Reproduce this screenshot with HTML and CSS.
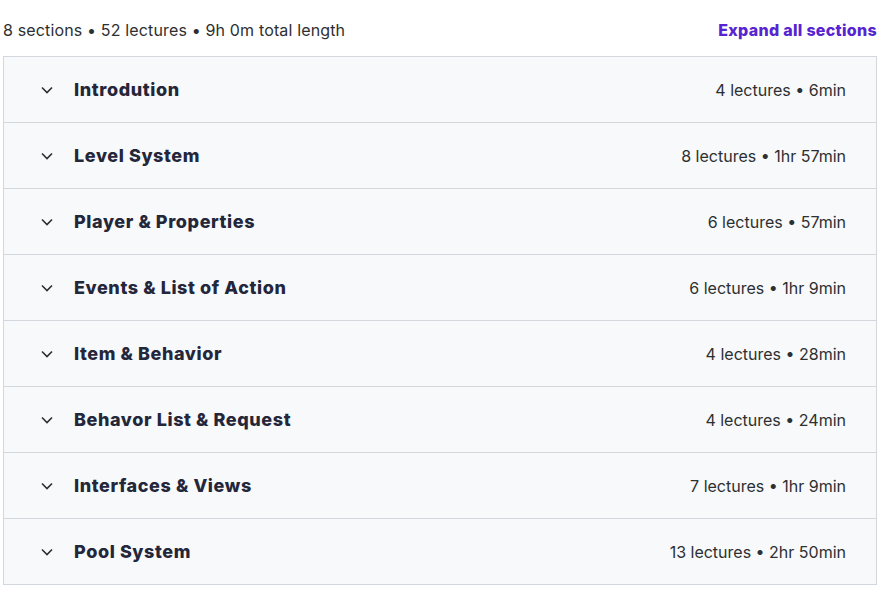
FILE: index.html
```html
<!DOCTYPE html>
<html>
<head>
<meta charset="utf-8">
<link rel="stylesheet" href="styles.css">
</head>
<body>
<div class="curriculum">
  <div class="summary">
    <span class="summary-text">8 sections • 52 lectures • 9h 0m total length</span>
    <a href="#" class="expand">Expand all sections</a>
  </div>
  <div class="sections">
    <div class="section">
      <span class="chev"><svg width="12" height="8" viewBox="0 0 12 8"><path d="M1 1.5l5 5 5-5" fill="none" stroke="#2d2f31" stroke-width="1.6"/></svg></span>
      <span class="title">Introdution</span>
      <span class="meta">4 lectures • 6min</span>
    </div>
    <div class="section">
      <span class="chev"><svg width="12" height="8" viewBox="0 0 12 8"><path d="M1 1.5l5 5 5-5" fill="none" stroke="#2d2f31" stroke-width="1.6"/></svg></span>
      <span class="title">Level System</span>
      <span class="meta">8 lectures • 1hr 57min</span>
    </div>
    <div class="section">
      <span class="chev"><svg width="12" height="8" viewBox="0 0 12 8"><path d="M1 1.5l5 5 5-5" fill="none" stroke="#2d2f31" stroke-width="1.6"/></svg></span>
      <span class="title">Player &amp; Properties</span>
      <span class="meta">6 lectures • 57min</span>
    </div>
    <div class="section">
      <span class="chev"><svg width="12" height="8" viewBox="0 0 12 8"><path d="M1 1.5l5 5 5-5" fill="none" stroke="#2d2f31" stroke-width="1.6"/></svg></span>
      <span class="title">Events &amp; List of Action</span>
      <span class="meta">6 lectures • 1hr 9min</span>
    </div>
    <div class="section">
      <span class="chev"><svg width="12" height="8" viewBox="0 0 12 8"><path d="M1 1.5l5 5 5-5" fill="none" stroke="#2d2f31" stroke-width="1.6"/></svg></span>
      <span class="title">Item &amp; Behavior</span>
      <span class="meta">4 lectures • 28min</span>
    </div>
    <div class="section">
      <span class="chev"><svg width="12" height="8" viewBox="0 0 12 8"><path d="M1 1.5l5 5 5-5" fill="none" stroke="#2d2f31" stroke-width="1.6"/></svg></span>
      <span class="title">Behavor List &amp; Request</span>
      <span class="meta">4 lectures • 24min</span>
    </div>
    <div class="section">
      <span class="chev"><svg width="12" height="8" viewBox="0 0 12 8"><path d="M1 1.5l5 5 5-5" fill="none" stroke="#2d2f31" stroke-width="1.6"/></svg></span>
      <span class="title">Interfaces &amp; Views</span>
      <span class="meta">7 lectures • 1hr 9min</span>
    </div>
    <div class="section">
      <span class="chev"><svg width="12" height="8" viewBox="0 0 12 8"><path d="M1 1.5l5 5 5-5" fill="none" stroke="#2d2f31" stroke-width="1.6"/></svg></span>
      <span class="title">Pool System</span>
      <span class="meta">13 lectures • 2hr 50min</span>
    </div>
  </div>
</div>
</body>
</html>
```

FILE: styles.css
```css
body {
  margin: 0;
  background: #fff;
  font-family: Inter, "Noto Sans", sans-serif;
  color: #2d2f31;
}

.curriculum {
  width: 874px;
  margin-left: 3px;
}

.summary {
  display: flex;
  justify-content: space-between;
  align-items: center;
  height: 52px;
  padding-top: 4px;
}

.summary-text {
  font-size: 16px;
  letter-spacing: 0.15px;
  color: #2d2f31;
}

.expand {
  font-size: 16px;
  font-weight: 800;
  letter-spacing: 0.3px;
  color: #5624d0;
  text-decoration: none;
}

.sections {
  border: 1px solid #d1d7dc;
  border-bottom: none;
}

.section {
  display: flex;
  align-items: center;
  height: 65px;
  background: #f7f9fa;
  border-bottom: 1px solid #d1d7dc;
  padding: 0 30px 0 37px;
}

.chev {
  display: flex;
  width: 33px;
}

.title {
  font-size: 18px;
  font-weight: 800;
  letter-spacing: 0.6px;
  color: #24263a;
  flex: 1;
}

.meta {
  font-size: 16px;
  color: #2d2f31;
}
```
